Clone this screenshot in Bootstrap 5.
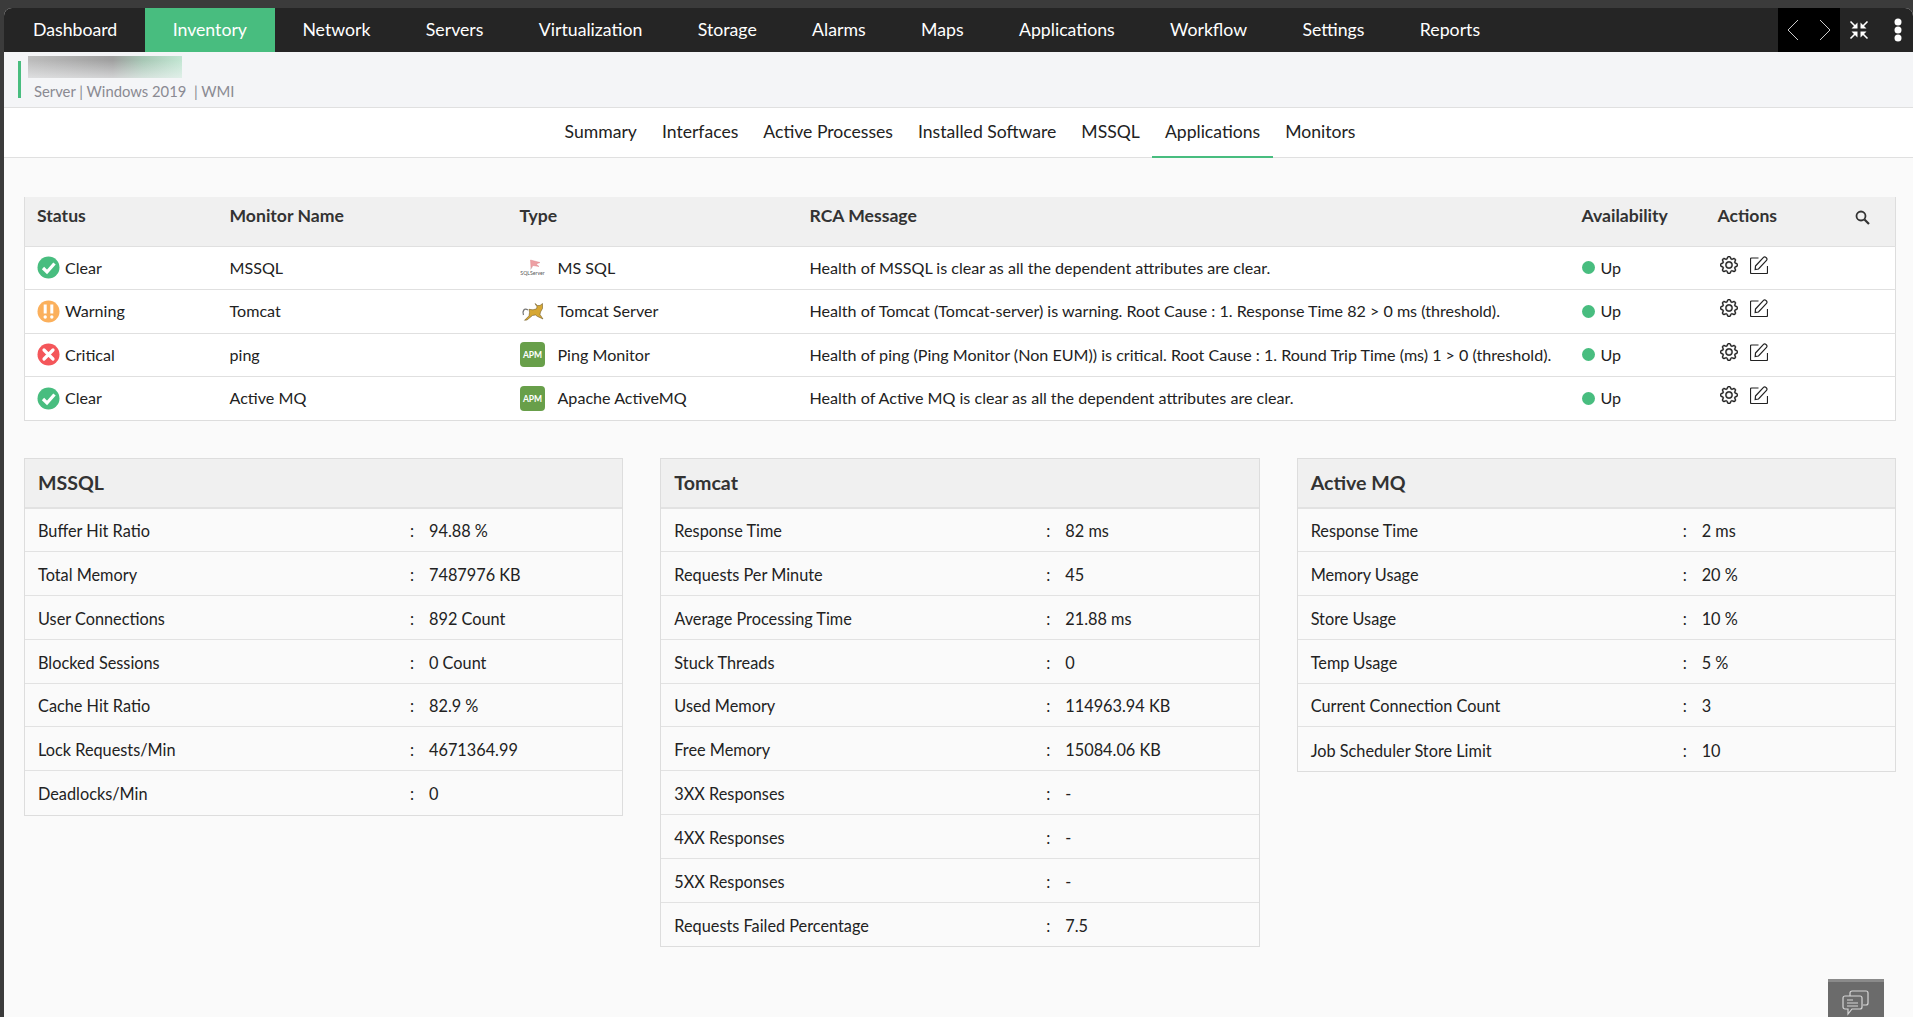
<!DOCTYPE html>
<html lang="en">
<head>
<meta charset="utf-8">
<title>Applications</title>
<link href="https://cdn.jsdelivr.net/npm/bootstrap@5.3.0/dist/css/bootstrap.min.css" rel="stylesheet">
<style>
html,body{height:100%;overflow:hidden}
body{background:#3b3b3b;font-family:Lato,"Liberation Sans",sans-serif;color:#222;font-size:16px;padding:8px 0 0 4px}
.shell{background:#fafafa;height:1009px;border-radius:8px 8px 0 0;overflow:hidden;position:relative}
.topbar{background:#252525;height:44px}
.topitem{color:#fff;font-size:17.7px;padding:0 27.7px;line-height:43px;text-decoration:none;display:block}
.topitem:hover{color:#fff}
.topitem.now{background:#48bd7f}
.topitem.first{padding-left:29px}
.pager{background:#000;width:62px;height:44px;margin-right:9px}
.tools{width:44px;padding-left:25px}
.devhead{background:#f4f5f7;height:56px;border-bottom:1px solid #e0e0e0;position:relative;padding:4px 0 0 24px}
.blurbox{width:154px;height:22px;background:linear-gradient(180deg,rgba(244,245,247,0) 20%,rgba(244,245,247,.6) 100%),linear-gradient(90deg,#bdbdbd 0,#a0a0a0 55%,#a8c8b6 75%,#c3e6d3 100%)}
.devsub{color:#8a8a92;font-size:14.8px;line-height:18px;margin:4px 0 0 6px}
.accent{position:absolute;left:14px;top:9px;width:3px;height:37px;background:#48bd7f}
.tabsbar{background:#fff;height:50px;border-bottom:1px solid #e0e0e0;padding-left:3px}
.tabitem{color:#222;font-size:17.6px;line-height:47px;height:50px;padding:0 12.5px;text-decoration:none;display:block}
.tabitem:hover{color:#222}
.tabitem.now{border-bottom:2px solid #48bd7f}
.mainarea{padding:39px 14px 0 20px}
.montable{table-layout:fixed;width:1872px;margin:0;border-left:1px solid #ddd;border-right:1px solid #ddd;border-bottom:1px solid #ddd;--bs-table-bg:#fff;--bs-table-color:#222;font-size:16.1px}
.montable th{background:#f0f0f0;font-size:17.6px;font-weight:700;height:49px;padding:0 0 10px 12px;vertical-align:middle;border-bottom:1px solid #e0e0e0;color:#333}
.montable td{height:43.5px;padding:0 0 0 12px;vertical-align:middle;border-bottom:1px solid #e0e0e0;white-space:nowrap}
.montable tr:last-child td{border-bottom:0}
.w-status{width:193px}.w-name{width:290px}.w-type{width:290px}.w-rca{width:772px}.w-avail{width:136px}.w-act{width:140px}
.stat-ico{width:23px;height:23px;margin-right:5px;flex:none}
.type-ico{width:25px;height:25px;margin-right:13px;flex:none}
.updot{width:13px;height:13px;border-radius:50%;background:#48bd7f;margin-right:6px;flex:none}
.act-ico{width:18px;height:18px;flex:none;color:#222}
.gear-ico{stroke:#222;stroke-width:.35}
.actgap{gap:12px;margin:-6px 0 0 2px}
.srch-ico{margin-left:-3px}
.cardsgrid{display:grid;grid-template-columns:repeat(3,1fr);gap:37px;margin-top:37px;width:1872px;align-items:start}
.infocard{background:#fafafa;border:1px solid #ddd}
.infohead{background:#f0f0f0;height:50px;border-bottom:2px solid #e2e2e2;font-size:19.6px;font-weight:700;line-height:47px;padding-left:13px;color:#333}
.inforow{height:43.8px;padding:3px 0 0 13px;border-bottom:1px solid #e2e2e2;font-size:16.3px}
.inforow:last-child{border-bottom:0}
.infokey{width:372px;flex:none}
.infocolon{width:19px;flex:none}
.chatbox{position:absolute;right:29px;bottom:0;width:56px;height:38px;background:#6b6b6b;border-top:3px solid #8a8a8a}
</style>
</head>
<body>
<svg width="0" height="0" class="d-block position-absolute">
<defs>
<symbol id="i-clear" viewBox="0 0 23 23"><circle cx="11.5" cy="11.5" r="11" fill="#48bd7f"/><path d="M6 12l4 4 7.5-8.5" fill="none" stroke="#fff" stroke-width="3.2"/></symbol>
<symbol id="i-warn" viewBox="0 0 23 23"><circle cx="11.5" cy="11.5" r="11" fill="#fbb05c"/><path d="M8.2 4.5v9M14.8 4.5v9" stroke="#fff" stroke-width="3"/><circle cx="8.2" cy="17" r="1.7" fill="#fff"/><circle cx="14.8" cy="17" r="1.7" fill="#fff"/></symbol>
<symbol id="i-crit" viewBox="0 0 23 23"><circle cx="11.5" cy="11.5" r="11" fill="#f4565a"/><path d="M7 7l9 9M16 7l-9 9" stroke="#fff" stroke-width="3.2" stroke-linecap="round"/></symbol>
<symbol id="i-apm" viewBox="0 0 25 25"><rect width="25" height="25" rx="4" fill="#689f4a"/><text x="12.5" y="15.8" text-anchor="middle" font-family="Lato,sans-serif" font-size="8.5" font-weight="700" fill="#fff">APM</text></symbol>
<symbol id="i-gear" viewBox="0 0 16 16"><path fill="currentColor" d="M8 4.754a3.246 3.246 0 1 0 0 6.492 3.246 3.246 0 0 0 0-6.492zM5.754 8a2.246 2.246 0 1 1 4.492 0 2.246 2.246 0 0 1-4.492 0z"/><path fill="currentColor" d="M9.796 1.343c-.527-1.79-3.065-1.79-3.592 0l-.094.319a.873.873 0 0 1-1.255.52l-.292-.16c-1.64-.892-3.433.902-2.54 2.541l.159.292a.873.873 0 0 1-.52 1.255l-.319.094c-1.79.527-1.79 3.065 0 3.592l.319.094a.873.873 0 0 1 .52 1.255l-.16.292c-.892 1.64.901 3.434 2.541 2.54l.292-.159a.873.873 0 0 1 1.255.52l.094.319c.527 1.79 3.065 1.79 3.592 0l.094-.319a.873.873 0 0 1 1.255-.52l.292.16c1.64.893 3.434-.902 2.54-2.541l-.159-.292a.873.873 0 0 1 .52-1.255l.319-.094c1.79-.527 1.79-3.065 0-3.592l-.319-.094a.873.873 0 0 1-.52-1.255l.16-.292c.893-1.64-.902-3.433-2.541-2.54l-.292.159a.873.873 0 0 1-1.255-.52l-.094-.319zm-2.633.283c.246-.835 1.428-.835 1.674 0l.094.319a1.873 1.873 0 0 0 2.693 1.115l.291-.16c.764-.415 1.6.42 1.184 1.185l-.159.292a1.873 1.873 0 0 0 1.116 2.692l.318.094c.835.246.835 1.428 0 1.674l-.319.094a1.873 1.873 0 0 0-1.115 2.693l.16.291c.415.764-.42 1.6-1.185 1.184l-.291-.159a1.873 1.873 0 0 0-2.693 1.116l-.094.318c-.246.835-1.428.835-1.674 0l-.094-.319a1.873 1.873 0 0 0-2.692-1.115l-.292.16c-.764.415-1.6-.42-1.184-1.185l.159-.291A1.873 1.873 0 0 0 1.945 8.93l-.319-.094c-.835-.246-.835-1.428 0-1.674l.319-.094A1.873 1.873 0 0 0 3.06 4.377l-.16-.292c-.415-.764.42-1.6 1.185-1.184l.292.159a1.873 1.873 0 0 0 2.692-1.115l.094-.319z"/></symbol>
<symbol id="i-edit" viewBox="0 0 18 18"><path d="M8.500 2H1.500a1 1 0 0 0-1 1v13.500a1 1 0 0 0 1 1H16.500a1 1 0 0 0 1-1V10" fill="none" stroke="currentColor" stroke-width="1.200"/><path d="M5.500 10L13.500 1.300a1.600 1.600 0 0 1 2.300 0l.7.700a1.600 1.600 0 0 1 0 2.300L8.500 13l-3.300.6z" fill="none" stroke="currentColor" stroke-width="1.200"/></symbol>
</defs>
</svg>

<div class="shell">
  <nav class="topbar d-flex align-items-stretch">
    <a class="topitem first" href="#">Dashboard</a>
    <a class="topitem now" href="#">Inventory</a>
    <a class="topitem" href="#">Network</a>
    <a class="topitem" href="#">Servers</a>
    <a class="topitem" href="#">Virtualization</a>
    <a class="topitem" href="#">Storage</a>
    <a class="topitem" href="#">Alarms</a>
    <a class="topitem" href="#">Maps</a>
    <a class="topitem" href="#">Applications</a>
    <a class="topitem" href="#">Workflow</a>
    <a class="topitem" href="#">Settings</a>
    <a class="topitem" href="#">Reports</a>
    <div class="ms-auto d-flex align-items-center">
      <div class="pager d-flex align-items-center justify-content-between px-2">
        <svg width="14" height="22" viewBox="0 0 14 22"><path d="M12 1L2 11l10 10" fill="none" stroke="#ccc" stroke-width="1"/></svg>
        <svg width="14" height="22" viewBox="0 0 14 22"><path d="M2 1l10 10L2 21" fill="none" stroke="#ccc" stroke-width="1"/></svg>
      </div>
      <svg width="20" height="20" viewBox="0 0 20 20"><path d="M1.500 1.500l6 6M18.500 1.500l-6 6M1.500 18.500l6-6M18.500 18.500l-6-6" fill="none" stroke="#fff" stroke-width="1.600"/><path d="M8.500 2.500v6h-6zM11.500 2.500v6h6zM8.500 17.500v-6h-6zM11.500 17.500v-6h6z" fill="#fff"/></svg>
      <div class="tools d-flex">
        <svg width="8" height="24" viewBox="0 0 8 24"><circle cx="4" cy="4" r="3.500" fill="#fff"/><circle cx="4" cy="12" r="3.500" fill="#fff"/><circle cx="4" cy="20" r="3.500" fill="#fff"/></svg>
      </div>
    </div>
  </nav>

  <header class="devhead">
    <span class="accent"></span>
    <div class="blurbox"></div>
    <div class="devsub">Server | Windows 2019 &nbsp;| WMI</div>
  </header>

  <nav class="tabsbar d-flex justify-content-center">
    <a class="tabitem" href="#">Summary</a>
    <a class="tabitem" href="#">Interfaces</a>
    <a class="tabitem" href="#">Active Processes</a>
    <a class="tabitem" href="#">Installed Software</a>
    <a class="tabitem" href="#">MSSQL</a>
    <a class="tabitem now" href="#">Applications</a>
    <a class="tabitem" href="#">Monitors</a>
  </nav>

  <main class="mainarea">
    <table class="table montable">
      <thead>
        <tr>
          <th class="w-status">Status</th>
          <th class="w-name">Monitor Name</th>
          <th class="w-type">Type</th>
          <th class="w-rca">RCA Message</th>
          <th class="w-avail">Availability</th>
          <th class="w-act">Actions</th>
          <th><svg class="srch-ico" width="15" height="15" viewBox="0 0 15 15"><circle cx="6" cy="6" r="4.500" fill="none" stroke="#333" stroke-width="1.800"/><path d="M9.500 9.500l4.500 4.500" stroke="#333" stroke-width="2.200"/></svg></th>
        </tr>
      </thead>
      <tbody>
        <tr>
          <td><div class="d-flex align-items-center"><svg class="stat-ico"><use href="#i-clear"/></svg>Clear</div></td>
          <td>MSSQL</td>
          <td><div class="d-flex align-items-center"><svg class="type-ico" viewBox="0 0 25 25"><path d="M10.500 5l9.500 2.500-4 1.500 3 2.500-6-1-2 3z" fill="#eda0a4" stroke="#d97a7e" stroke-width=".4"/><path d="M12 12l-1.500 2.500" stroke="#bbb" stroke-width=".6"/><text x="12.500" y="20" text-anchor="middle" font-family="Lato,sans-serif" font-size="5.200" fill="#555">SQLServer</text></svg>MS SQL</div></td>
          <td>Health of MSSQL is clear as all the dependent attributes are clear.</td>
          <td><div class="d-flex align-items-center"><span class="updot"></span>Up</div></td>
          <td colspan="2"><div class="d-flex actgap"><svg class="act-ico gear-ico"><use href="#i-gear"/></svg><svg class="act-ico"><use href="#i-edit"/></svg></div></td>
        </tr>
        <tr>
          <td><div class="d-flex align-items-center"><svg class="stat-ico"><use href="#i-warn"/></svg>Warning</div></td>
          <td>Tomcat</td>
          <td><div class="d-flex align-items-center"><svg class="type-ico" viewBox="0 0 25 25"><path d="M8 11C4 8.500 2 12.500 3.500 16" fill="none" stroke="#777" stroke-width="1.300"/><path d="M15 4.500l2.500 2h2.500l2.500-2v5l-2 3.500-.5 2.500 3 4.500-5.500-2.500-2-1.500-3 .5-5.500 4.500-2.500.3 4.500-4.500.5-3.500-.5-3 4 .5 3.500-1 .5-2z" fill="#d6a733" stroke="#5e4a1b" stroke-width=".5"/></svg>Tomcat Server</div></td>
          <td>Health of Tomcat (Tomcat-server) is warning. Root Cause : 1. Response Time 82 &gt; 0 ms (threshold).</td>
          <td><div class="d-flex align-items-center"><span class="updot"></span>Up</div></td>
          <td colspan="2"><div class="d-flex actgap"><svg class="act-ico gear-ico"><use href="#i-gear"/></svg><svg class="act-ico"><use href="#i-edit"/></svg></div></td>
        </tr>
        <tr>
          <td><div class="d-flex align-items-center"><svg class="stat-ico"><use href="#i-crit"/></svg>Critical</div></td>
          <td>ping</td>
          <td><div class="d-flex align-items-center"><svg class="type-ico"><use href="#i-apm"/></svg>Ping Monitor</div></td>
          <td>Health of ping (Ping Monitor (Non EUM)) is critical. Root Cause : 1. Round Trip Time (ms) 1 &gt; 0 (threshold).</td>
          <td><div class="d-flex align-items-center"><span class="updot"></span>Up</div></td>
          <td colspan="2"><div class="d-flex actgap"><svg class="act-ico gear-ico"><use href="#i-gear"/></svg><svg class="act-ico"><use href="#i-edit"/></svg></div></td>
        </tr>
        <tr>
          <td><div class="d-flex align-items-center"><svg class="stat-ico"><use href="#i-clear"/></svg>Clear</div></td>
          <td>Active MQ</td>
          <td><div class="d-flex align-items-center"><svg class="type-ico"><use href="#i-apm"/></svg>Apache ActiveMQ</div></td>
          <td>Health of Active MQ is clear as all the dependent attributes are clear.</td>
          <td><div class="d-flex align-items-center"><span class="updot"></span>Up</div></td>
          <td colspan="2"><div class="d-flex actgap"><svg class="act-ico gear-ico"><use href="#i-gear"/></svg><svg class="act-ico"><use href="#i-edit"/></svg></div></td>
        </tr>
      </tbody>
    </table>

    <section class="cardsgrid">
      <div class="infocard">
        <div class="infohead">MSSQL</div>
        <div class="inforow d-flex align-items-center"><span class="infokey">Buffer Hit Ratio</span><span class="infocolon">:</span><span>94.88 %</span></div>
        <div class="inforow d-flex align-items-center"><span class="infokey">Total Memory</span><span class="infocolon">:</span><span>7487976 KB</span></div>
        <div class="inforow d-flex align-items-center"><span class="infokey">User Connections</span><span class="infocolon">:</span><span>892 Count</span></div>
        <div class="inforow d-flex align-items-center"><span class="infokey">Blocked Sessions</span><span class="infocolon">:</span><span>0 Count</span></div>
        <div class="inforow d-flex align-items-center"><span class="infokey">Cache Hit Ratio</span><span class="infocolon">:</span><span>82.9 %</span></div>
        <div class="inforow d-flex align-items-center"><span class="infokey">Lock Requests/Min</span><span class="infocolon">:</span><span>4671364.99</span></div>
        <div class="inforow d-flex align-items-center"><span class="infokey">Deadlocks/Min</span><span class="infocolon">:</span><span>0</span></div>
      </div>
      <div class="infocard">
        <div class="infohead">Tomcat</div>
        <div class="inforow d-flex align-items-center"><span class="infokey">Response Time</span><span class="infocolon">:</span><span>82 ms</span></div>
        <div class="inforow d-flex align-items-center"><span class="infokey">Requests Per Minute</span><span class="infocolon">:</span><span>45</span></div>
        <div class="inforow d-flex align-items-center"><span class="infokey">Average Processing Time</span><span class="infocolon">:</span><span>21.88 ms</span></div>
        <div class="inforow d-flex align-items-center"><span class="infokey">Stuck Threads</span><span class="infocolon">:</span><span>0</span></div>
        <div class="inforow d-flex align-items-center"><span class="infokey">Used Memory</span><span class="infocolon">:</span><span>114963.94 KB</span></div>
        <div class="inforow d-flex align-items-center"><span class="infokey">Free Memory</span><span class="infocolon">:</span><span>15084.06 KB</span></div>
        <div class="inforow d-flex align-items-center"><span class="infokey">3XX Responses</span><span class="infocolon">:</span><span>-</span></div>
        <div class="inforow d-flex align-items-center"><span class="infokey">4XX Responses</span><span class="infocolon">:</span><span>-</span></div>
        <div class="inforow d-flex align-items-center"><span class="infokey">5XX Responses</span><span class="infocolon">:</span><span>-</span></div>
        <div class="inforow d-flex align-items-center"><span class="infokey">Requests Failed Percentage</span><span class="infocolon">:</span><span>7.5</span></div>
      </div>
      <div class="infocard">
        <div class="infohead">Active MQ</div>
        <div class="inforow d-flex align-items-center"><span class="infokey">Response Time</span><span class="infocolon">:</span><span>2 ms</span></div>
        <div class="inforow d-flex align-items-center"><span class="infokey">Memory Usage</span><span class="infocolon">:</span><span>20 %</span></div>
        <div class="inforow d-flex align-items-center"><span class="infokey">Store Usage</span><span class="infocolon">:</span><span>10 %</span></div>
        <div class="inforow d-flex align-items-center"><span class="infokey">Temp Usage</span><span class="infocolon">:</span><span>5 %</span></div>
        <div class="inforow d-flex align-items-center"><span class="infokey">Current Connection Count</span><span class="infocolon">:</span><span>3</span></div>
        <div class="inforow d-flex align-items-center"><span class="infokey">Job Scheduler Store Limit</span><span class="infocolon">:</span><span>10</span></div>
      </div>
    </section>
  </main>

  <div class="chatbox d-flex justify-content-center pt-2">
    <svg width="28" height="28" viewBox="0 0 28 28" fill="none" stroke="#d5d5d5" stroke-width="1.200"><path d="M8 6V3a2 2 0 0 1 2-2h14a2 2 0 0 1 2 2v10a2 2 0 0 1-2 2h-3"/><path d="M3 6h15a2 2 0 0 1 2 2v9a2 2 0 0 1-2 2H10l-4 5v-5H3a2 2 0 0 1-2-2V8a2 2 0 0 1 2-2z"/><path d="M5 10h6M5 13h11M5 16h11"/></svg>
  </div>
</div>
</body>
</html>
